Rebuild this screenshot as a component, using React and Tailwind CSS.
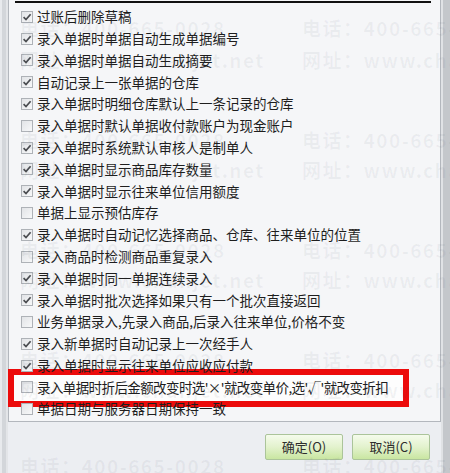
import React from "react";

const rows = [
  { on: true, text: "过账后删除草稿" },
  { on: true, text: "录入单据时单据自动生成单据编号" },
  { on: true, text: "录入单据时单据自动生成摘要" },
  { on: true, text: "自动记录上一张单据的仓库" },
  { on: true, text: "录入单据时明细仓库默认上一条记录的仓库" },
  { on: false, text: "录入单据时默认单据收付款账户为现金账户" },
  { on: true, text: "录入单据时系统默认审核人是制单人" },
  { on: true, text: "录入单据时显示商品库存数量" },
  { on: true, text: "录入单据时显示往来单位信用额度" },
  { on: false, text: "单据上显示预估库存" },
  { on: true, text: "录入单据时自动记忆选择商品、仓库、往来单位的位置" },
  { on: false, text: "录入商品时检测商品重复录入" },
  { on: true, text: "录入单据时同一单据连续录入" },
  { on: true, text: "录入单据时批次选择如果只有一个批次直接返回" },
  { on: false, text: "业务单据录入,先录入商品,后录入往来单位,价格不变" },
  { on: true, text: "录入新单据时自动记录上一次经手人" },
  { on: true, text: "录入单据时显示往来单位应收应付款" },
  { on: false, text: "录入单据时折后金额改变时选'×'就改变单价,选'√'就改变折扣", mark: true },
  { on: false, text: "单据日期与服务器日期保持一致" },
];

const phone = "电话：400-665-0028";
const site = "网址：www.chanjet.net";

// watermark tiles: [left, center y, text]
const marks = [
  [20, 28, phone], [302, 28, phone],
  [20, 60, site], [302, 60, site],
  [20, 140, phone], [302, 140, phone],
  [20, 170, site], [302, 170, site],
  [20, 250, phone], [302, 250, phone],
  [20, 280, site], [302, 280, site],
  [20, 360, phone], [302, 360, phone],
  [20, 390, site], [302, 390, site],
  [20, 466, phone], [302, 466, phone],
];

const Check = ({ on }) => (
  <span className="w-[12px] h-[12px] shrink-0 border border-[#aeb2b7] bg-gradient-to-br from-[#e2e4e7] to-[#f7f8f9] flex items-center justify-center">
    {on && (
      <svg width="10" height="10" viewBox="0 0 10 10">
        <path d="M1.6 5.2 L4 7.6 L8.6 2.2" fill="none" stroke="#4a4c50" strokeWidth="1.7" />
      </svg>
    )}
  </span>
);

const Btn = ({ children }) => (
  <button className="w-[78px] h-[26px] rounded-[2px] border border-[#abc49a] bg-gradient-to-b from-[#f5fbec] via-[#e3f2cd] to-[#c9e6a1] text-[13px] text-[#2d2d2d] flex items-center justify-center">
    {children}
  </button>
);

export default function App() {
  return (
    <div
      className="relative w-[450px] h-[473px] overflow-hidden flex bg-[#eceef2]"
      style={{ fontFamily: '"Noto Sans CJK SC", "Noto Sans", sans-serif' }}
    >
      <div className="w-[8px] bg-[#d3d6da] border-l-2 border-l-[#e8eaed] border-r-2 border-r-[#e3e5e8]" />

      <div className="flex-1 flex flex-col">
        <div className="h-[422px] bg-[#f5f6f8] border-l border-r border-b border-[#b3b7bd] flex flex-col">
          <div className="mt-[1px] h-[2px] ml-[6px] mr-[9px] bg-[#111]" />
          <div className="mt-[3px] flex flex-col">
            {rows.map((r, i) => (
              <div key={i} className="relative h-[21.8px] flex items-center pl-[12px] gap-[4px]">
                {r.mark && (
                  <div className="absolute z-10 left-[-1px] top-[-8px] w-[401px] h-[38px] border-[6px] border-[#ec0b0b] bg-[#fdfdfd]" />
                )}
                <span className="relative z-20 flex items-center gap-[4px]">
                  <Check on={r.on} />
                  <span
                    className={
                      r.mark
                        ? "text-[13.5px] leading-none text-[#1e1e1e] whitespace-nowrap tracking-[-0.6px]"
                        : "text-[13.5px] leading-none text-[#1e1e1e] whitespace-nowrap"
                    }
                  >
                    {r.text}
                  </span>
                </span>
              </div>
            ))}
          </div>
        </div>

        <div className="mt-[12px] mr-[11px] flex justify-end gap-[9px]">
          <Btn>确定(O)</Btn>
          <Btn>取消(C)</Btn>
        </div>
      </div>

      <div className="w-[9px] bg-[#c4c7cb] border-l-2 border-l-[#e0e2e5]" />

      {marks.map(([x, y, t], i) => (
        <span
          key={i}
          className="absolute z-30 pointer-events-none whitespace-nowrap text-[19px] leading-none tracking-[1.5px] font-bold text-[rgba(60,70,90,0.06)]"
          style={{ left: x, top: y - 10 }}
        >
          {t}
        </span>
      ))}
    </div>
  );
}
